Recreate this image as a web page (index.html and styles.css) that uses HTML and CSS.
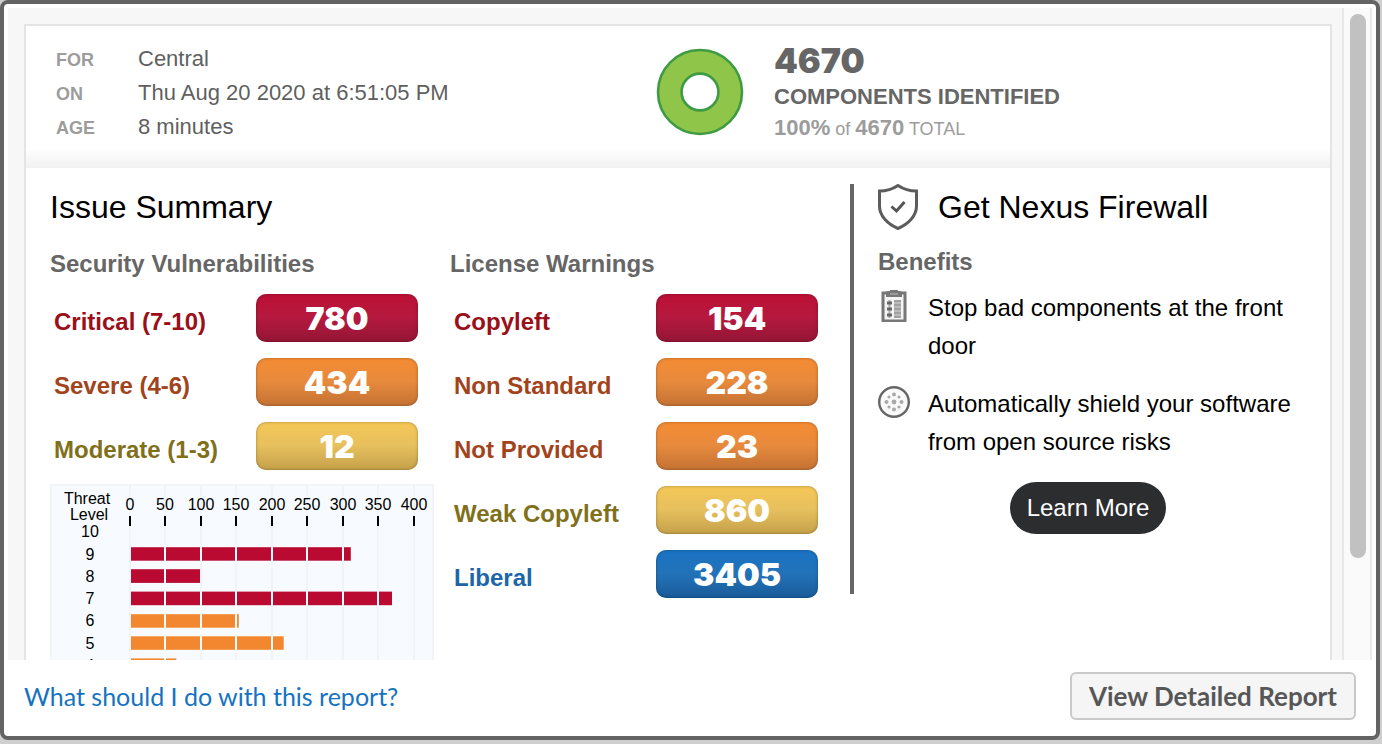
FILE: index.html
```html
<!DOCTYPE html>
<html lang="en">
<head>
<meta charset="utf-8">
<title>Component Report</title>
<link rel="stylesheet" href="styles.css">
</head>
<body>
<div class="dialog">
  <div class="viewport">
    <div class="scroll-content">
      <article class="report">
        <header class="report-header">
          <dl class="meta">
            <dt>FOR</dt><dd>Central</dd>
            <dt>ON</dt><dd>Thu Aug 20 2020 at 6:51:05 PM</dd>
            <dt>AGE</dt><dd>8 minutes</dd>
          </dl>
          <div class="identified">
            <svg class="donut" viewBox="0 0 88 88" aria-hidden="true">
              <circle cx="44" cy="44" r="30.5" fill="none" stroke="#8fc64a" stroke-width="24"/>
              <circle cx="44" cy="44" r="42" fill="none" stroke="#3e9a43" stroke-width="2.6"/>
              <circle cx="44" cy="44" r="18.4" fill="#fff" stroke="#3e9a43" stroke-width="2.6"/>
            </svg>
            <div class="totals">
              <p class="count">4670</p>
              <p class="count-label">COMPONENTS IDENTIFIED</p>
              <p class="count-total"><b>100%</b> of <b>4670</b> TOTAL</p>
            </div>
          </div>
        </header>
        <main class="report-body">
          <section class="issues">
            <h2>Issue Summary</h2>
            <div class="issue-columns">
              <section>
                <h3>Security Vulnerabilities</h3>
                <ul class="levels">
                  <li class="critical"><span class="level-name">Critical (7-10)</span><span class="pill">780</span></li>
                  <li class="severe"><span class="level-name">Severe (4-6)</span><span class="pill">434</span></li>
                  <li class="moderate"><span class="level-name">Moderate (1-3)</span><span class="pill">12</span></li>
                </ul>
                <svg class="chart" viewBox="0 0 384 270" role="img" aria-label="Vulnerabilities by threat level">
                  <rect width="384" height="270" fill="#f7fbff"/>
                  <path d="M1 270V1H383V270" fill="none" stroke="#f1f5fa" stroke-width="2"/>
                  <path d="M80 0V270M115 0V270M151 0V270M186 0V270M222 0V270M257 0V270M293 0V270M328 0V270M364 0V270" stroke="#f0f4f9" stroke-width="2"/>
                  <g text-anchor="middle">
                    <text x="37" y="20">Threat</text><text x="39" y="36">Level</text>
                    <text x="80" y="26">0</text><text x="115" y="26">50</text><text x="151" y="26">100</text><text x="186" y="26">150</text><text x="222" y="26">200</text><text x="257" y="26">250</text><text x="293" y="26">300</text><text x="328" y="26">350</text><text x="364" y="26">400</text>
                    <text x="40" y="53">10</text><text x="40" y="76">9</text><text x="40" y="98">8</text><text x="40" y="120">7</text><text x="40" y="142">6</text><text x="40" y="165">5</text><text x="40" y="187">4</text>
                  </g>
                  <path d="M80 32V42M115 32V42M151 32V42M186 32V42M222 32V42M257 32V42M293 32V42M328 32V42M364 32V42" stroke="#000" stroke-width="2"/>
                  <g fill="#bb0a31">
                    <rect x="81" y="63.2" width="219.8" height="13.5"/>
                    <rect x="81" y="85.2" width="69" height="13.7"/>
                    <rect x="81" y="107.6" width="261" height="13.6"/>
                  </g>
                  <g fill="#f3872f">
                    <rect x="81" y="130.2" width="107.8" height="13.5"/>
                    <rect x="81" y="152.3" width="152.7" height="13.5"/>
                    <rect x="81" y="174.4" width="45.3" height="13.5"/>
                  </g>
                  <path d="M115 62V190M151 62V78M151 106V168M186 62V78M186 106V168M222 62V78M222 106V122M222 152V166M257 62V78M257 107V122M293 62V78M293 107V122M328 107V122" stroke="#fbfdff" stroke-width="2"/>
                </svg>
              </section>
              <section>
                <h3>License Warnings</h3>
                <ul class="levels">
                  <li class="critical"><span class="level-name">Copyleft</span><span class="pill">154</span></li>
                  <li class="severe"><span class="level-name">Non Standard</span><span class="pill">228</span></li>
                  <li class="severe"><span class="level-name">Not Provided</span><span class="pill">23</span></li>
                  <li class="moderate"><span class="level-name">Weak Copyleft</span><span class="pill">860</span></li>
                  <li class="liberal"><span class="level-name">Liberal</span><span class="pill">3405</span></li>
                </ul>
              </section>
            </div>
          </section>
          <aside class="firewall">
            <div class="firewall-title">
              <svg width="40" height="46" viewBox="0 0 40 46" fill="none" aria-hidden="true">
                <path d="M20 1.5C14.5 5.2 8 7 1.5 7V22C1.5 32 9.5 40 20 44.5C30.5 40 38.5 32 38.5 22V7C32 7 25.5 5.2 20 1.5Z" stroke="#5c5c5c" stroke-width="3"/>
                <path d="M13.5 22.5L18.5 27L26.5 18" stroke="#555" stroke-width="3"/>
              </svg>
              <h2>Get Nexus Firewall</h2>
            </div>
            <h3>Benefits</h3>
            <ul class="benefits">
              <li>
                <svg width="32" height="32" viewBox="0 0 32 32" aria-hidden="true">
                  <rect x="5" y="3" width="22" height="28" fill="#f4f4f4" stroke="#777" stroke-width="3"/>
                  <path d="M8 2.5Q8 1 10 1H12V0H20V1H22Q24 1 24 2.5V7H8Z" fill="#777"/>
                  <path d="M12 4H20" stroke="#999" stroke-width="2"/>
                  <path d="M19.5 10V28" stroke="#bbb" stroke-width="7"/>
                  <path d="M16 11H23M16 15H23M16 19H23M16 23H23M16 27H23" stroke="#999" stroke-width="1.5"/>
                  <path d="M11.5 10V28" stroke="#aaa" stroke-width="2"/>
                  <path d="M9 13H14M9 19H14M9 25H14" stroke="#666" stroke-width="3"/>
                </svg>
                <span>Stop bad components at the front door</span>
              </li>
              <li>
                <svg width="32" height="32" viewBox="0 0 32 32" aria-hidden="true">
                  <circle cx="16" cy="16" r="14.8" fill="#fafafa" stroke="#666" stroke-width="2.4"/>
                  <g fill="#aaa"><circle cx="16" cy="16" r="2.4"/><circle cx="16" cy="8.500" r="2"/><circle cx="16" cy="23.500" r="2"/><circle cx="8.500" cy="16" r="2"/><circle cx="23.500" cy="16" r="2"/><circle cx="11" cy="11" r="1.600"/><circle cx="21" cy="11" r="1.600"/><circle cx="11" cy="21" r="1.600"/><circle cx="21" cy="21" r="1.600"/></g>
                </svg>
                <span>Automatically shield your software from open source risks</span>
              </li>
            </ul>
            <a class="learn-more" href="#">Learn More</a>
          </aside>
        </main>
      </article>
    </div>
    <div class="scrollbar" aria-hidden="true"><div class="thumb"></div></div>
  </div>
  <footer class="actions">
    <a class="help" href="#">What should I do with this report?</a>
    <button class="detail" type="button">View Detailed Report</button>
  </footer>
</div>
</body>
</html>
```
FILE: styles.css
```css
* { box-sizing: border-box; }
body {
  margin: 0;
  height: 100vh;
  padding: 0 2px 4px 0;
  background: #cfcfcf;
  font-family: "Liberation Sans", Arial, sans-serif;
  font-size: 24px;
  color: #000;
}
h2, h3, p, ul, dl, dd { margin: 0; padding: 0; }
ul { list-style: none; }
svg { display: block; flex: none; }

.dialog {
  display: flex;
  flex-direction: column;
  height: 100%;
  border: 4px solid #636363;
  border-radius: 8px;
  background: #fff;
  overflow: hidden;
}
.viewport {
  display: flex;
  flex: 1;
  min-height: 0;
  margin: 4px 4px 0;
  overflow: hidden;
}
.scroll-content {
  flex: 1;
  min-width: 0;
  padding: 16px 10px 16px 16px;
  background: #f7f7f7;
}
.scrollbar {
  flex: none;
  width: 30px;
  padding: 6px;
  border: solid #e8e8e8;
  border-width: 0 2px;
  background: #fafafa;
}
.thumb {
  width: 16px;
  height: 85%;
  border-radius: 8px;
  background: #c1c1c1;
}

.report { border: 2px solid #e4e4e4; background: #fff; }
.report-header {
  display: grid;
  grid-template-columns: 600fr 644fr;
  align-items: start;
  padding: 14px 30px 23px;
  background: linear-gradient(#fdfdfd, #f1f1f1) bottom / 100% 18px no-repeat;
}
.meta {
  display: grid;
  grid-template-columns: 82px 1fr;
  align-items: baseline;
  margin-top: 2px;
  font-size: 22px;
  line-height: 34px;
  color: #5f5f5f;
}
.meta dt { font-size: 18px; font-weight: bold; line-height: 28px; color: #9c9c9c; }
.identified { display: flex; align-items: flex-start; gap: 30px; color: #666; }
.donut { width: 88px; height: 88px; margin-top: 8px; }
.totals { padding-top: 1px; }
.count { font: 900 34px/40px Inter, "Arial Black", sans-serif; }
.count-label { font-size: 22px; font-weight: bold; line-height: 32px; }
.count-total { font-size: 18px; line-height: 32px; color: #9c9c9c; }
.count-total b { font-size: 22px; line-height: 24px; }

.report-body {
  display: grid;
  grid-template-columns: 800fr 456fr;
  align-items: start;
  padding: 16px 24px;
}
h2 { font-size: 32px; font-weight: normal; line-height: 46px; }
h3 { font-size: 24px; line-height: 32px; color: #666; }
.issue-columns {
  display: grid;
  grid-template-columns: 1fr 1fr;
  gap: 16px;
  margin-top: 18px;
  padding-right: 16px;
}
.levels {
  display: grid;
  gap: 16px;
  padding: 14px 16px 14px 4px;
}
.levels li { display: flex; justify-content: space-between; align-items: flex-end; }
.level-name { font-weight: bold; line-height: 40px; }
.pill {
  width: 162px;
  border-radius: 10px;
  font: 900 32px/50px Inter, "Arial Black", sans-serif;
  height: 48px;
  text-align: center;
  box-shadow: inset 0 0 3px rgba(0, 0, 0, .35);
}
.critical { color: #9b0f19; }
.critical .pill { background: linear-gradient(#bd1035, #b5193f 50%, #931535); }
.severe { color: #a1441b; }
.severe .pill { background: linear-gradient(#f58b33, #e68a3d 50%, #c47133); }
.moderate { color: #80701a; }
.moderate .pill { background: linear-gradient(#f5c757, #e6c05e 50%, #c5a049); }
.liberal { color: #1d66a8; }
.liberal .pill { background: linear-gradient(#1a73c3, #2272b8 50%, #195b99); }
.levels .pill { color: #fff; }
.chart { width: 100%; font-size: 16px; }

.firewall {
  min-height: 410px;
  padding: 0 8px 0 24px;
  border-left: 4px solid #666;
}
.firewall-title { display: flex; gap: 20px; margin-bottom: 16px; }
.benefits { display: grid; gap: 20px; margin: 11px 0 21px; line-height: 38px; }
.benefits li { display: flex; gap: 18px; }
.benefits svg { margin-top: 1px; }
.learn-more {
  display: block;
  width: fit-content;
  margin: 0 auto;
  padding: 0 17px;
  border-radius: 26px;
  background: #2c2d2e;
  color: #fff;
  line-height: 52px;
  text-decoration: none;
}

.actions {
  display: flex;
  justify-content: space-between;
  align-items: center;
  padding: 12px 20px 16px;
  font-family: Lato, sans-serif;
}
.help { font-size: 25px; color: #1673c0; text-decoration: none; }
.detail {
  padding: 0 17px;
  border: 2px solid #c9c9c9;
  border-radius: 6px;
  background: #f5f5f5;
  color: #575757;
  font: bold 26px/44px Lato, sans-serif;
}
```
